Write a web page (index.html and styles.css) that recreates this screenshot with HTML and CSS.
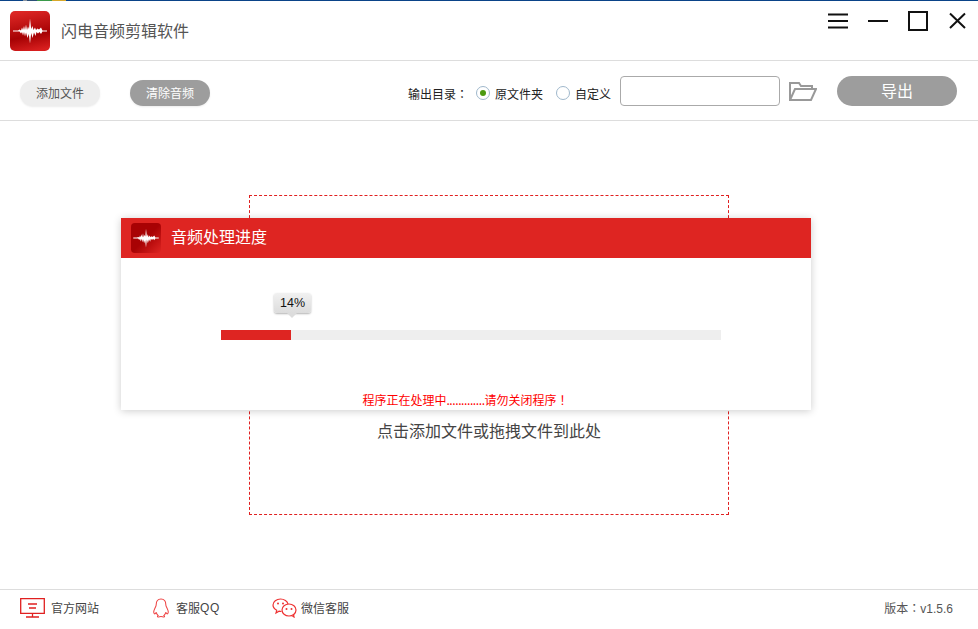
FILE: index.html
```html
<!DOCTYPE html>
<html lang="zh">
<head>
<meta charset="utf-8">
<title>闪电音频剪辑软件</title>
<link rel="stylesheet" href="styles.css">
</head>
<body>
<div class="app">
  <div class="topline"><i class="c0"></i><i class="c1"></i><i class="c2"></i><i class="c3"></i><i class="c4"></i></div>
  <header class="titlebar">
    <svg class="logo" viewBox="0 0 40 40">
      <defs><linearGradient id="lg" x1=".4" y1="0" x2=".6" y2="1"><stop offset="0" stop-color="#dc2624"/><stop offset=".62" stop-color="#a60204"/><stop offset="1" stop-color="#d81f1f"/></linearGradient></defs>
      <rect width="40" height="40" rx="5" fill="url(#lg)"/>
      <path d="M3 19.400H8L9.500 18.500L11 19.400L12 16.500L13 19L14 15L15 19L16 13.500L17 19L18 15.500L19 18L20 7.500L21.200 18L22.500 15L23.500 19L25 16.500L26 19L27.500 17.500L29 18.500L31 16.500L32.500 19.400H37V20.600H32.500L31 23L29.500 21L28 22.500L26.500 21L25.500 25L24 21.500L22.500 27L21.200 22L20 32.500L18.800 23L17.500 27L16 21.500L15 25.500L14 21L13 24.500L12 21L11 22.500L9.500 20.600H3Z" fill="#fff"/>
    </svg>
    <span class="apptitle">闪电音频剪辑软件</span>
    <div class="winbtns">
      <svg class="win" viewBox="0 0 138 24"><path d="M0 3.500h20M0 10h20M0 16.500h20M40 10h20" stroke="#111" stroke-width="2" fill="none"/><rect x="81" y="1" width="18" height="18" fill="none" stroke="#111" stroke-width="2"/><path d="M122 2.500l15 14.500M137 2.500l-15 14.500" stroke="#111" stroke-width="2" fill="none"/></svg>
    </div>
  </header>
  <section class="toolbar">
    <button class="pill light">添加文件</button>
    <button class="pill gray">清除音频</button>
    <div class="output">
      <span class="lbl">输出目录<span class="punct" lang="zh-TW">：</span></span>
      <span class="radio on"></span><span class="opt">原文件夹</span>
      <span class="radio"></span><span class="opt">自定义</span>
      <div class="pathbox"></div>
      <svg class="folder" viewBox="0 0 28 20"><path d="M1 19V2h9l2 3h11v3M1 19l5-11h21l-5 11z" fill="none" stroke="#999" stroke-width="2"/></svg>
      <button class="export">导出</button>
    </div>
  </section>
  <main class="stage">
    <div class="drop"><p class="hint">点击添加文件或拖拽文件到此处</p></div>
    <div class="modal">
      <div class="mhead">
        <svg class="mlogo" viewBox="0 0 40 40">
          <defs><linearGradient id="lg2" x1="0" y1="0" x2="1" y2="1"><stop offset="0" stop-color="#a80204"/><stop offset=".5" stop-color="#a80204"/><stop offset="1" stop-color="#de2522"/></linearGradient></defs>
          <rect width="40" height="40" rx="5" fill="url(#lg2)"/>
          <path d="M3 19.400H8L9.500 18.500L11 19.400L12 16.500L13 19L14 15L15 19L16 13.500L17 19L18 15.500L19 18L20 7.500L21.200 18L22.500 15L23.500 19L25 16.500L26 19L27.500 17.500L29 18.500L31 16.500L32.500 19.400H37V20.600H32.500L31 23L29.500 21L28 22.500L26.500 21L25.500 25L24 21.500L22.500 27L21.200 22L20 32.500L18.800 23L17.500 27L16 21.500L15 25.500L14 21L13 24.500L12 21L11 22.500L9.500 20.600H3Z" fill="#fff"/>
        </svg>
        <span class="mtitle">音频处理进度</span>
      </div>
      <div class="mbody">
        <div class="track"><div class="fill"></div><div class="tip">14%</div></div>
        <p class="warn">程序正在处理中<span class="dots">.............</span>请勿关闭程序<span class="punct" lang="zh-TW">！</span></p>
      </div>
    </div>
  </main>
  <footer class="footer">
    <a class="flink w1"><svg class="ficon" width="25" height="20" viewBox="0 0 25 20"><path d="M.7.700h23.600v14.600H.7zM12.500 15.300v3.500M6 19h13M8 6h9M9 10h7" fill="none" stroke="#e02020" stroke-width="1.300"/></svg>官方网站</a>
    <a class="flink w2"><svg class="ficon" width="18" height="20" viewBox="0 0 17 21"><path d="M8.500 1C5 1 3.500 3.500 3.500 6.500c0 2-.5 2.500-1.500 4.500-1 2-1.500 4.500-.5 5.500.6.500 1.500-.5 2-1.500 0 1.500 1 2.500 2 3.500-1 .5-1 1.500 0 1.500 1 0 2-.5 3-.5s2 .5 3 .5 1-1 0-1.500c1-1 2-2 2-3.500.5 1 1.400 2 2 1.500 1-1 .5-3.500-.5-5.500-1-2-1.500-2.500-1.500-4.500C13.500 3.500 12 1 8.500 1z" fill="none" stroke="#e44" stroke-width="1.100"/></svg>客服<span class="qq">QQ</span></a>
    <a class="flink w3"><svg class="ficon" width="25" height="20" viewBox="0 0 25 20"><path d="M9.500 13.500c-1 0-2-.2-2.500-.3L4 15l.7-2.700C2.500 11 1 9 1 7c0-3.300 3.500-6 7.500-6 3.700 0 7 2.200 7.500 5" fill="none" stroke="#e33" stroke-width="1.200"/><ellipse cx="17" cy="12" rx="7" ry="6" fill="#fff" stroke="#e33" stroke-width="1.200"/><path d="M20 17.500l2 1.500-.5-3" fill="#fff" stroke="#e33" stroke-width="1.200"/><circle cx="6" cy="5.500" r="1" fill="#e33"/><circle cx="11" cy="5.500" r="1" fill="#e33"/><circle cx="14.500" cy="11" r="1" fill="#e33"/><circle cx="19.500" cy="11" r="1" fill="#e33"/></svg>微信客服</a>
    <span class="version">版本<span class="punct" lang="zh-TW">：</span>v1.5.6</span>
  </footer>
</div>
</body>
</html>
```
FILE: styles.css
```css
* { box-sizing: border-box; }
html, body { margin: 0; padding: 0; }
body { width: 978px; height: 629px; overflow: hidden; background: #fff; font-family: "Noto Sans CJK SC", "Liberation Sans", sans-serif; }
.app { width: 978px; height: 629px; display: flex; flex-direction: column; }
.punct { font-family: "Noto Sans CJK TC", sans-serif; }
.dots { letter-spacing: -.4px; }
.qq { letter-spacing: .6px; }
.topline { height: 1px; display: flex; background: #0a4388; flex: none; }
.topline i { display: block; height: 1px; }
.topline .c0 { width: 23px; }
.topline .c1 { width: 4px; background: #8a94a0; }
.topline .c2 { width: 10px; background: #2b4f78; }
.topline .c3 { width: 15px; background: #3a9a4a; }
.topline .c4 { width: 14px; background: #d8a82a; }
.titlebar { height: 60px; flex: none; display: flex; align-items: center; padding-left: 10px; border-bottom: 1px solid #ddd; }
.logo { width: 40px; height: 40px; }
.apptitle { margin-left: 11px; margin-bottom: 2px; font-size: 16px; color: #555; }
.winbtns { margin-left: auto; margin-right: 12px; align-self: flex-start; padding-top: 10px; }
.win { width: 138px; height: 24px; display: block; overflow: visible; }
.toolbar { height: 60px; flex: none; display: flex; align-items: center; padding-left: 20px; border-bottom: 1px solid #ddd; }
.pill { width: 80px; height: 26px; margin-top: 4px; border: 0; border-radius: 13px; font: 12px "Noto Sans CJK SC", sans-serif; padding: 0; box-shadow: 0 1px 2px rgba(0,0,0,.08); }
.pill.light { background: #eee; color: #555; }
.pill.gray { background: #9d9d9d; color: #fff; margin-left: 30px; }
.output { margin-left: auto; margin-right: 21px; display: flex; align-items: center; }
.lbl, .opt { font-size: 12px; color: #222; margin-top: 5px; }
.lbl { margin-right: 8px; }
.radio { width: 14px; height: 14px; margin-top: 4px; margin-right: 5px; border-radius: 50%; border: 1px solid #9fb8cc; flex: none; display: flex; align-items: center; justify-content: center; }
.radio.on::after { content: ""; width: 6px; height: 6px; border-radius: 50%; background: #4c9a10; }
.opt { margin-right: 13px; }
.opt:last-of-type { margin-right: 9px; }
.pathbox { width: 160px; height: 30px; border: 1px solid #aaa; border-radius: 4px; }
.folder { width: 28px; height: 20px; margin-left: 9px; }
.export { width: 120px; height: 30px; margin-left: 20px; border: 0; border-radius: 15px; background: #9d9d9d; color: #fff; font: 16px "Noto Sans CJK SC", sans-serif; padding: 0 0 2px; }
.stage { flex: 1; position: relative; display: flex; justify-content: center; align-items: flex-start; padding-top: 74px; }
.drop { width: 480px; height: 320px; border: 1px dashed #e02020; display: flex; justify-content: center; }
.hint { margin: 223px 0 0; font-size: 16px; line-height: 22px; color: #444; }
.modal { position: absolute; left: 121px; top: 97px; width: 690px; height: 192px; background: #fff; box-shadow: 0 1px 8px rgba(0,0,0,.2); display: flex; flex-direction: column; }
.mhead { height: 40px; background: #de2522; display: flex; align-items: center; padding-left: 10px; flex: none; }
.mlogo { width: 30px; height: 30px; }
.mtitle { margin-left: 10px; margin-bottom: 4px; font-size: 16px; color: #fff; }
.mbody { flex: 1; display: flex; flex-direction: column; align-items: center; padding-top: 72px; }
.track { width: 500px; height: 10px; margin-left: 10px; background: #eee; position: relative; flex: none; }
.fill { width: 70px; height: 10px; background: #de2522; }
.tip { position: absolute; left: 53px; top: -37px; width: 37px; height: 20px; border-radius: 3px; background: linear-gradient(#f1f1f1, #dcdcdc); box-shadow: 0 1px 2px rgba(0,0,0,.3); font: 12.500px/20px "Liberation Sans", sans-serif; text-align: center; color: #111; }
.tip::after { content: ""; position: absolute; left: 13px; top: 20px; border: 5px solid transparent; border-top-color: #dcdcdc; border-bottom: 0; }
.warn { margin: 51px 0 0 -1px; font-size: 12px; line-height: 18px; color: #f00; }
.footer { height: 40px; flex: none; display: flex; align-items: center; border-top: 1px solid #ddd; padding: 0 0 4px 20px; font-family: "Liberation Sans", "Noto Sans CJK SC", sans-serif; font-size: 12px; color: #444; }
.flink { display: flex; align-items: center; }
.ficon { margin-right: 6px; flex: none; }
.w1 { width: 132px; }
.w2 { width: 120px; }
.w3 .ficon { margin-right: 4px; }
.version { margin-left: auto; margin-right: 25px; color: #555; }
```
